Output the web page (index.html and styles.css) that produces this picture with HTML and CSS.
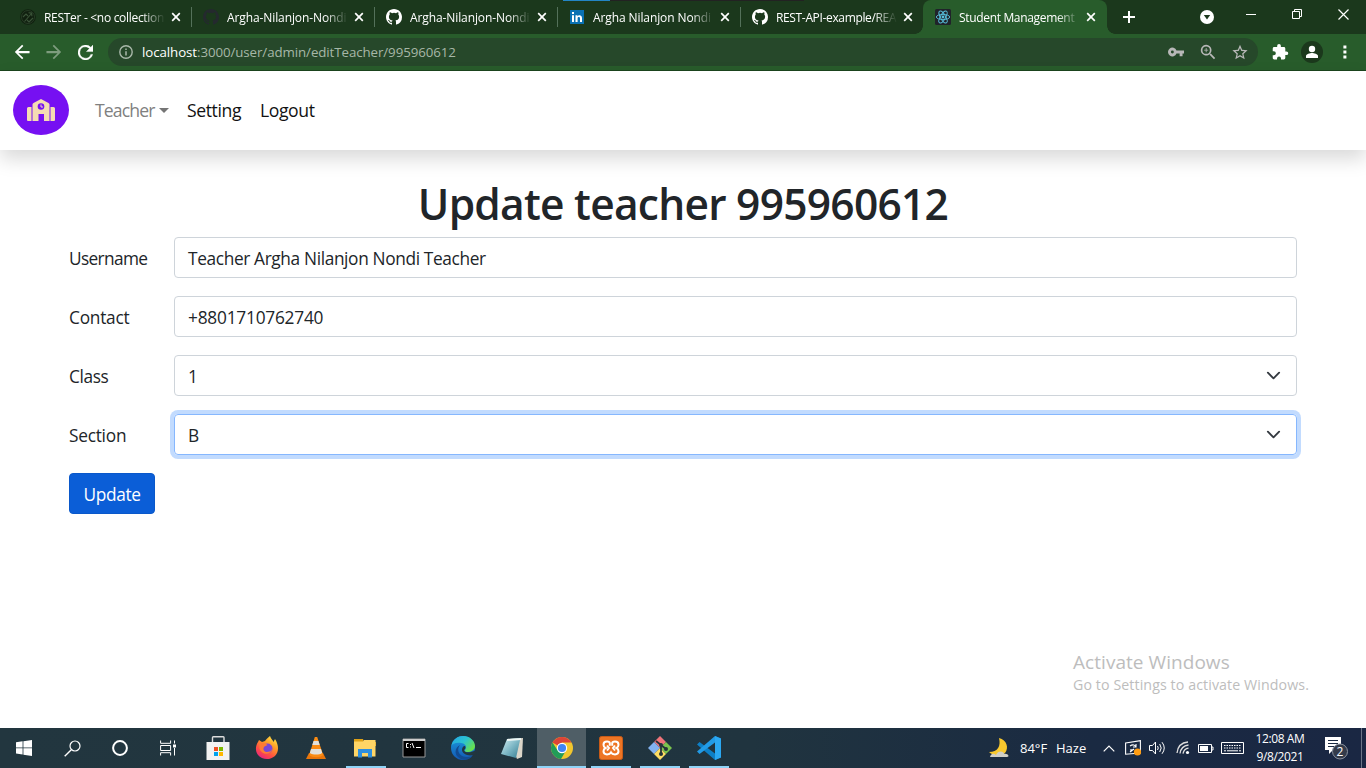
FILE: index.html
```html
<!DOCTYPE html>
<html lang="en">
<head>
<meta charset="utf-8">
<title>Student Management</title>
<link rel="stylesheet" href="styles.css">
</head>
<body>
<svg width="0" height="0" class="defs">
  <defs>
    <symbol id="github" viewBox="0 0 16 16"><path d="M8 0C3.58 0 0 3.58 0 8c0 3.54 2.29 6.53 5.47 7.59.4.07.55-.17.55-.38 0-.19-.01-.82-.01-1.49-2.01.37-2.53-.49-2.69-.94-.09-.23-.48-.94-.82-1.13-.28-.15-.68-.52-.01-.53.63-.01 1.08.58 1.23.82.72 1.21 1.87.87 2.33.66.07-.52.28-.87.51-1.07-1.78-.2-3.64-.89-3.64-3.95 0-.87.31-1.59.82-2.15-.08-.2-.36-1.02.08-2.12 0 0 .67-.21 2.2.82a7.6 7.6 0 0 1 4 0c1.53-1.04 2.2-.82 2.2-.82.44 1.1.16 1.92.08 2.12.51.56.82 1.27.82 2.15 0 3.07-1.87 3.75-3.65 3.95.29.25.54.73.54 1.48 0 1.07-.01 1.93-.01 2.2 0 .21.15.46.55.38A8.01 8.01 0 0 0 16 8c0-4.42-3.58-8-8-8z"/></symbol>
    <symbol id="close" viewBox="0 0 10 10"><path d="M1.200 1.200l7.600 7.600M8.800 1.200L1.200 8.800" stroke="#fff" stroke-width="1.700" fill="none"/></symbol>
    <linearGradient id="edgeA" x1="0" y1="0" x2="1" y2=".6"><stop offset="0" stop-color="#23a5e8"/><stop offset=".55" stop-color="#2cc3d0"/><stop offset="1" stop-color="#68e04c"/></linearGradient>
    <linearGradient id="edgeB" x1="0" y1="0" x2="0" y2="1"><stop offset="0" stop-color="#1b9de2"/><stop offset="1" stop-color="#1357b0"/></linearGradient>
    <linearGradient id="fox" x1=".9" y1="0" x2=".3" y2="1"><stop offset="0" stop-color="#fff04a"/><stop offset=".4" stop-color="#ff9a26"/><stop offset=".75" stop-color="#ff4a45"/><stop offset="1" stop-color="#e8277e"/></linearGradient>
    <linearGradient id="note" x1="0" y1="0" x2="1" y2="1"><stop offset="0" stop-color="#d8f1f5"/><stop offset=".5" stop-color="#7fb8c6"/><stop offset="1" stop-color="#347c91"/></linearGradient>
  </defs>
</svg>
<header class="tabstrip">
  <div class="tab"><svg class="fav" viewBox="0 0 16 16"><circle cx="8" cy="8" r="7.800" fill="#10200f"/><circle cx="8" cy="8" r="6.500" fill="none" stroke="#2f462e" stroke-width=".7"/><path d="M4.500 12.500l7-8M8.500 3.700l3.200.4.2 3.200M3 8l3-3 2 2M7 11l2 2 4-4" stroke="#3b5439" stroke-width="1.100" fill="none"/></svg><span class="title t1">RESTer - &lt;no collection</span><svg class="x"><use href="#close"/></svg></div>
  <div class="tab"><svg class="fav" fill="#24292e"><use href="#github"/></svg><span class="title t2">Argha-Nilanjon-Nondi</span><svg class="x"><use href="#close"/></svg></div>
  <div class="tab"><svg class="fav" fill="#fff"><use href="#github"/></svg><span class="title t2">Argha-Nilanjon-Nondi</span><svg class="x"><use href="#close"/></svg></div>
  <div class="tab"><svg class="fav" viewBox="0 0 16 16"><path d="M1 1h14v14H1z" fill="#0a71b3"/><path d="M3 6.300h2V13H3zM3 3h2v2H3zM6.500 6.300h2v1c1-1.700 4.500-1.600 4.500 1.600V13h-2V9.500c0-2-2.400-1.800-2.400 0V13H6.500z" fill="#fff"/></svg><span class="title t3">Argha Nilanjon Nondi</span><svg class="x"><use href="#close"/></svg></div>
  <div class="tab last"><svg class="fav" fill="#fff"><use href="#github"/></svg><span class="title t4">REST-API-example/REA</span><svg class="x"><use href="#close"/></svg></div>
  <div class="tab active"><svg class="fav" viewBox="0 0 16 16"><rect width="16" height="16" rx="1.500" fill="#20232a"/><g fill="none" stroke="#58bfdc" stroke-width=".9"><ellipse cx="8" cy="8" rx="6.700" ry="2.600"/><ellipse cx="8" cy="8" rx="6.700" ry="2.600" transform="rotate(60 8 8)"/><ellipse cx="8" cy="8" rx="6.700" ry="2.600" transform="rotate(120 8 8)"/></g><circle cx="8" cy="8" r="1.400" fill="#58bfdc"/></svg><span class="title t5">Student Management</span><svg class="x"><use href="#close"/></svg></div>
  <svg class="plus" viewBox="0 0 12 12"><path d="M6 0v12M0 6h12" stroke="#fff" stroke-width="2"/></svg>
  <div class="winbtns">
    <svg width="14" height="14" viewBox="0 0 14 14" class="drop"><circle cx="7" cy="7" r="7" fill="#fff"/><path d="M3.800 5h6.400L7 9.400z" fill="#1b381c"/></svg>
    <svg width="10" height="10" class="min"><path d="M0 5.500h10" stroke="#fff"/></svg>
    <svg width="10" height="10" class="max"><path d="M.5 2.500h7v7h-7zM2.500 2.500v-2h7v7h-2" stroke="#fff" fill="none"/></svg>
    <svg width="11" height="11" class="quit"><path d="M.5.500l10 10M10.500.500l-10 10" stroke="#fff" stroke-width="1.200"/></svg>
  </div>
  <i class="strip"></i>
</header>
<div class="toolbar">
  <svg class="nav" viewBox="0 0 24 24"><path d="M24 10.300H6l8-8L12 .3.300 12 12 23.700l2-2-8-8h18z" fill="#fff" transform="translate(1 1) scale(.93)"/></svg>
  <svg class="nav fwd" viewBox="0 0 24 24"><path d="M24 10.300H6l8-8L12 .3.300 12 12 23.700l2-2-8-8h18z" fill="#7e9c7e" transform="translate(23 1) scale(-.93 .93)"/></svg>
  <svg class="nav" viewBox="4 4 16 16"><path d="M17.650 6.350A8 8 0 1 0 19.730 14h-2.080A6 6 0 1 1 12 6c1.660 0 3.140.69 4.220 1.780L13 11h7V4z" fill="#fff" stroke="#fff" stroke-width=".4"/></svg>
  <div class="omni">
    <svg width="14" height="14" viewBox="0 0 14 14"><circle cx="7" cy="7" r="6.200" fill="none" stroke="#a9b8aa" stroke-width="1.400"/><path d="M7 6.200V10.500M7 3.500V5" stroke="#a9b8aa" stroke-width="1.500"/></svg>
    <span class="url"><b>localhost</b>:3000/user/admin/editTeacher/995960612</span>
    <span class="omni-icons">
      <svg width="16" height="16" viewBox="1 1 22 22"><path d="M12.650 10A6 6 0 1 0 12.650 14H17v4h4v-4h2v-4zM7 14a2 2 0 1 1 0-4 2 2 0 0 1 0 4z" fill="#b8b8b8"/></svg>
      <svg width="16" height="16" viewBox="2 2 19.500 19.500"><path d="M15.500 14h-.79l-.28-.27A6.500 6.500 0 1 0 13.730 14.430l.27.28v.79l5 5L20.500 19zM9.500 14a4.500 4.500 0 1 1 0-9 4.500 4.500 0 0 1 0 9zM9 7h1v2h2v1h-2v2H9v-2H7V9h2z" fill="#b8b8b8"/></svg>
      <svg width="16" height="16" viewBox="1.500 1 21 21"><path d="M22 9.240l-7.190-.62L12 2 9.190 8.630 2 9.240l5.460 4.730L5.820 21 12 17.270 18.180 21l-1.630-7.030zM12 15.400l-3.760 2.270 1-4.280-3.320-2.880 4.380-.38L12 6.100l1.710 4.040 4.380.38-3.320 2.880 1 4.280z" fill="#b8b8b8"/></svg>
    </span>
  </div>
  <svg class="ext" width="17" height="17" viewBox="1 1 23 23"><path d="M20.500 11H19V7a2 2 0 0 0-2-2h-4V3.500a2.500 2.500 0 0 0-5 0V5H4a2 2 0 0 0-2 2v3.800h1.500a2.700 2.700 0 0 1 0 5.400H2V20c0 1.100.9 2 2 2h3.800v-1.500a2.700 2.700 0 0 1 5.400 0V22H17a2 2 0 0 0 2-2v-4h1.500a2.500 2.500 0 0 0 0-5z" fill="#fff"/></svg>
  <svg class="avatar" width="22" height="22" viewBox="0 0 22 22"><circle cx="11" cy="11" r="11" fill="#1b381c"/><circle cx="11" cy="8" r="3.200" fill="#fff"/><path d="M5 17v-2c0-2 4-3 6-3s6 1 6 3v2z" fill="#fff"/></svg>
  <svg class="dots" width="4" height="14" viewBox="0 0 4 14"><path d="M.4.400h3v3h-3zM.4 5.400h3v3h-3zM.4 10.400h3v3h-3z" fill="#fff"/></svg>
</div>
<main class="page">
  <nav class="navbar">
    <svg class="logo" viewBox="0 0 56 50"><ellipse cx="28" cy="25" rx="28" ry="25" fill="#7610f2"/><path d="M14 23.500a1.500 1.500 0 0 1 1.500-1.500h3v14h-3.500a1 1 0 0 1-1-1zM42 23.500a1.500 1.500 0 0 0-1.500-1.500h-3v14h3.500a1 1 0 0 0 1-1zM19.500 19.500q0-1 1-1.600L28 14l7.500 3.900q1 .6 1 1.600V36H31v-7h-5.500v7h-6z" fill="#f5dcb3"/><circle cx="28" cy="21.500" r="3.300" fill="#7610f2"/><path d="M28 19.500v2.500h2" stroke="#f5dcb3" fill="none"/></svg>
    <a class="n1">Teacher</a><i class="caret"></i><a class="n2">Setting</a><a class="n3">Logout</a>
  </nav>
  <section class="content">
    <h1><span>Update teacher 995960612</span></h1>
    <form>
      <div class="row"><label class="l1">Username</label><div class="field"><span class="v1">Teacher Argha Nilanjon Nondi Teacher</span></div></div>
      <div class="row"><label class="l2">Contact</label><div class="field"><span class="v2">+8801710762740</span></div></div>
      <div class="row"><label class="l3">Class</label><div class="field"><span>1</span><svg class="chev" viewBox="0 0 16 16"><path d="M2 5l6 6 6-6" fill="none" stroke="#343a40" stroke-width="2" stroke-linecap="round" stroke-linejoin="round"/></svg></div></div>
      <div class="row"><label class="l4">Section</label><div class="field focus"><span>B</span><svg class="chev" viewBox="0 0 16 16"><path d="M2 5l6 6 6-6" fill="none" stroke="#343a40" stroke-width="2" stroke-linecap="round" stroke-linejoin="round"/></svg></div></div>
      <button type="button"><span>Update</span></button>
    </form>
  </section>
  <div class="watermark"><p class="w1">Activate Windows</p><p class="w2">Go to Settings to activate Windows.</p></div>
</main>
<footer class="taskbar">
  <div class="sys">
    <div><svg width="16" height="16" viewBox="0 0 16 16"><path d="M0 2.300L6.600 1.300V7.500H0zM7.400 1.200L16 0v7.500H7.400zM0 8.300h6.600v6.200L0 13.600zM7.400 8.300H16V16l-8.600-1.300z" fill="#fff"/></svg></div>
    <div><svg width="17" height="17" viewBox="0 0 17 17"><circle cx="11" cy="6" r="5" fill="none" stroke="#fff" stroke-width="1.200"/><path d="M7.300 9.700L.7 16.300" stroke="#fff" stroke-width="1.400"/></svg></div>
    <div><svg width="18" height="18"><circle cx="9" cy="9" r="6.900" fill="none" stroke="#fff" stroke-width="2"/></svg></div>
    <div><svg width="17" height="16" viewBox="0 0 17 16"><path d="M.6.500v2.800h10V.5M.6 15.500v-2.800h10v2.800M.6 5.500h10v5H.6zM14.500.500v3M14.500 8v7.500" fill="none" stroke="#fff"/><path d="M13 4.500h3v3h-3z" fill="#fff"/></svg></div>
  </div>
  <div class="apps">
    <div><svg viewBox="0 0 24 24"><path d="M6.500 7V1.500q0-.8.800-.8h9.900q.8 0 .8.800V7" fill="none" stroke="#ddd" stroke-width="1.400"/><path d="M.5 6h23v18H.5z" fill="#f2f2f2"/><path d="M8 11h4v4H8z" fill="#f05023"/><path d="M13 11h4v4h-4z" fill="#7db900"/><path d="M8 16h4v4H8z" fill="#00a2ed"/><path d="M13 16h4v4h-4z" fill="#ffb800"/></svg></div>
    <div><svg viewBox="0 0 24 24"><path d="M15 0c1 3 3 4 3.500 6L20 3c4 6 4 13 0 17-5 4.500-13 4-17-1-3-4-2.500-9 0-13l1-2 3 2 3-1c1-2 3-3 5-5z" fill="url(#fox)"/><circle cx="12.500" cy="12.500" r="5" fill="#7a48d6"/><path d="M4.500 8c3-2 6-1 8 1l-3 1.500c-2 2-1 5 2 5.500 3 0 5-1 6-4-1 7-10 8-13 1z" fill="#ff7b35"/></svg></div>
    <div><svg viewBox="0 0 24 24"><path d="M5 17h14l3 6H2z" fill="#e8750b"/><path d="M10.800 1h2.400l6 18c-3 3-11 3-14 0z" fill="#fa8b13"/><path d="M9.500 5h5l1.200 4H8.300zM7 13h10l1.200 4c-3 2-9 2-12.400 0z" fill="#e2e0da"/></svg></div>
    <div class="open"><svg viewBox="0 0 24 24"><path d="M1 3h9l1 3h12v4H1z" fill="#dfa117"/><path d="M1 5.500h9l1-1.500h11.500v16.500H1z" fill="#ffd566"/><path d="M5 21.500V13h14v8.500h-4V17H9v4.500z" fill="#2f8fde"/></svg></div>
    <div><svg viewBox="0 0 24 24"><path d="M1 3h22v18H1z" fill="#000" stroke="#999"/><path d="M1 3h22v2H1z" fill="#ccc"/><path d="M6.500 7.500H4.500v4h2M8 8.500h1M8 11h1M10 7l2 5M14 11.500h5" fill="none" stroke="#fff"/></svg></div>
    <div><svg viewBox="0 0 24 24"><circle cx="12" cy="12" r="12" fill="url(#edgeB)"/><path d="M.3 10C2 3 7 0 12 0c7 0 12 5 12 10 0 4-4 6-8 6-2 0-3-1-2-2 3-4-1-7-4-7C5 6 1 8 .3 10z" fill="url(#edgeA)"/><path d="M9 9c-4 5-1 12 7 12 3 0 5-1 6-2-3 6-12 6-16 1-3-4-1-9 3-11z" fill="#124b91"/><path d="M14 10c1 2 0 3-1 4 0 3 7 3 11 .5v4c-6 2.500-13-.5-13-4.500 0-2 1-4 3-4z" fill="#22363f"/></svg></div>
    <div><svg viewBox="0 0 24 24"><path d="M8 3l15-1-1 19-5 2z" fill="#dad5c9"/><path d="M7 3l13.500-1L16 22 1 18z" fill="url(#note)"/><path d="M7 3l14-1v2L7 5z" fill="#eef6f4"/></svg></div>
    <div class="current"><svg viewBox="0 0 24 24"><circle cx="12" cy="12" r="11" fill="#f2c62e"/><path d="M12 12L2.500 6.500A11 11 0 0 1 21.500 6.500H12z" fill="#dc4437"/><path d="M2.500 6.500A11 11 0 0 0 11 23l5-8.500-9-1z" fill="#219c58"/><circle cx="12" cy="12" r="5.200" fill="#fff"/><circle cx="12" cy="12" r="4.100" fill="#4184f3"/></svg></div>
    <div class="open"><svg viewBox="0 0 24 24"><rect x=".5" y=".5" width="23" height="23" rx="2" fill="#ed7524" stroke="#c75b18"/><path d="M10.800 9.800V7.200Q10.800 5.600 8 5.600 4.500 5.600 4.500 8.700 4.500 11 6.500 12 4.500 13 4.500 15.300 4.500 18.400 8 18.400 11 18.400 12 16.500 13 18.400 16 18.400 19.500 18.400 19.500 15.300 19.500 13 17.500 12 19.500 11 19.500 8.700 19.500 5.600 16 5.600 13.200 5.600 13.200 7.200V9.800M8 9.500l2 2.500-2 2.500M16 9.500l-2 2.500 2 2.500" fill="none" stroke="#fff" stroke-width="2"/></svg></div>
    <div class="open"><svg viewBox="0 0 24 24"><path d="M12 0l6 6-6 6-6-6z" fill="#f0747a"/><path d="M6 6l6 6-6 6-6-6z" fill="#82b2f0"/><path d="M18 6l6 6-6 6-6-6z" fill="#7bc34e"/><path d="M12 12l6 6-6 6-6-6z" fill="#ffdd63"/><path d="M8 5l5 4v9M13 9l5 4" fill="none" stroke="#25323a" stroke-width="1.800"/><g fill="#25323a"><circle cx="13" cy="9" r="2"/><circle cx="13" cy="18" r="2"/><circle cx="18" cy="13" r="2"/></g></svg></div>
    <div class="open"><svg viewBox="0 0 24 24"><path d="M18 0l6 2.500v19L18 24 0 8.500 2.500 6 18 17.500z" fill="#0d7fc6"/><path d="M18 0L0 15.500 2.500 18 18 6.500z" fill="#229be6"/><path d="M18 0l6 2.500v19L18 24z" fill="#2ba8f2"/></svg></div>
  </div>
  <div class="tray">
    <svg class="moon" width="22" height="22" viewBox="0 0 22 22"><path d="M11 1c8 2 10 10 6 15-4 4-12 3-16-1 9 0 12-6 10-14z" fill="#f8c82e"/><path d="M2 20c1-4 4-4 6-2 2-5 8-4 8-1 4-1 6 3 3 3z" fill="#d0cfc8"/></svg>
    <span class="temp">84°F</span><span class="haze">Haze</span>
    <svg class="up" width="12" height="7"><path d="M.7 6.300L6 1l5.300 5.300" stroke="#fff" stroke-width="1.200" fill="none"/></svg>
    <svg class="upd" width="17" height="16" viewBox="0 0 17 16"><path d="M.6 3L15.400.6V13L.6 14.200zM5 6c3-2 5-1 6 1M11 4v3H8M5 10l4-.5M9 9l-4 3" fill="none" stroke="#fff" stroke-width="1.100"/><circle cx="12.500" cy="12" r="3.600" fill="#ff9d12"/></svg>
    <svg class="vol" width="17" height="14" viewBox="0 0 17 14"><path d="M.5 4.500h3l3-3.500v12l-3-3.500h-3zM8.500 5q1.500 2 0 4M10.700 3q3 4 0 8M13 1.200q4.500 5.800 0 11.600" fill="none" stroke="#fff"/></svg>
    <svg class="wifi" width="14" height="14" viewBox="0 0 14 14"><path d="M1 12Q2 2 12 1M4 12.500Q5 5 12.500 4M7 12.700q1-5 5.500-5.500" fill="none" stroke="#ddd" stroke-width="1.300"/><circle cx="11.500" cy="11.500" r="1.600" fill="#fff"/></svg>
    <svg class="bat" width="16" height="9" viewBox="0 0 16 9"><path d="M.5.500h13v8H.5zM13.500 3h1.500v3h-1.500z" fill="none" stroke="#fff"/><path d="M2 2h8v5H2z" fill="#fff"/></svg>
    <svg class="kb" width="23" height="12" viewBox="0 0 23 12"><path d="M.5.500h22v11H.5z" fill="none" stroke="#fff"/><path d="M3 3.500h17M3 6h17" stroke="#fff" stroke-dasharray="1.500 1"/><path d="M3 8.800h2M6 8.800h11M18 8.800h2" stroke="#fff"/></svg>
    <div class="clock"><span class="c1">12:08 AM</span><span class="c2">9/8/2021</span></div>
    <svg class="notif" width="25" height="24" viewBox="0 0 25 24"><path d="M1 1h16v13H9l-4 4v-4H1z" fill="#fff"/><path d="M4 4.500h10M4 7.500h10M4 10.500h6" stroke="#1a2a42"/><circle cx="16" cy="15.500" r="7.500" fill="#343b4a" stroke="#8b93a0"/><text x="16" y="20" class="num" text-anchor="middle">2</text></svg>
    <i class="edge"></i>
  </div>
</footer>
</body>
</html>
```
FILE: styles.css
```css
* { box-sizing: border-box; }
body { margin: 0; width: 1366px; height: 768px; overflow: hidden; display: flex; flex-direction: column; font-family: "Open Sans", "Noto Sans", sans-serif; background: #fff; }
.defs { display: block; position: absolute; }
svg { display: block; flex: none; }
span, a, label { white-space: nowrap; }

.tabstrip { position: relative; height: 34px; flex: none; background: #1b381c; display: flex; padding-left: 8px; }
.strip { position: absolute; left: 563px; top: 0; width: 241px; height: 1px; background: linear-gradient(90deg, #2385c4 47px, #222 47px); }
.tab { position: relative; width: 183px; height: 34px; flex: none; display: flex; align-items: center; padding-left: 12px; color: #fff; font-size: 12px; }
.tab::after { content: ""; position: absolute; right: -1px; top: 7px; width: 1px; height: 20px; background: #54715a; }
.tab.last::after, .tab.active::after { display: none; }
.tab.active { width: 184px; background: #285c2b; border-radius: 8px 8px 0 0; }
.tab.active::before { content: ""; position: absolute; left: -8px; right: -8px; bottom: 0; height: 8px; background: radial-gradient(circle at 0 0, transparent 7.5px, #285c2b 8px) left / 8px 8px no-repeat, radial-gradient(circle at 100% 0, transparent 7.5px, #285c2b 8px) right / 8px 8px no-repeat; }
.fav { width: 16px; height: 16px; margin-right: 8px; }
.title { width: 127px; -webkit-mask-image: linear-gradient(90deg, #000 98px, transparent 121px); mask-image: linear-gradient(90deg, #000 98px, transparent 121px); }
.x { width: 10px; height: 10px; }
.t1 { letter-spacing: -.3px; }
.t2 { letter-spacing: -.1px; }
.t3 { letter-spacing: -.1px; }
.t4 { letter-spacing: -.35px; }
.t5 { letter-spacing: -.33px; }
.plus { width: 12px; height: 12px; margin: 11px 0 0 16px; }
.winbtns { display: flex; margin: 9px 0 0 65px; }
.drop { margin-top: 1px; }
.min { margin-left: 32px; }
.max { margin-left: 36px; }
.quit { margin-left: 36px; }

.toolbar { height: 37px; flex: none; background: #285c2b; border-bottom: 1px solid #1b451e; display: flex; align-items: center; padding-left: 14px; }
.nav { width: 16px; height: 16px; margin-right: 16px; }
.toolbar .nav:nth-child(3) { width: 15px; height: 15px; margin-right: 15px; }
.omni { width: 1150px; height: 28px; border-radius: 14px; background: #26482a; display: flex; align-items: center; padding: 0 10px 0 11px; }
.url { color: #a6b7a7; font-size: 13.3px; margin-left: 9px; letter-spacing: -.08px; }
.url b { color: #fff; font-weight: 400; }
.omni-icons { display: flex; gap: 16px; margin-left: auto; }
.ext { margin-left: 14px; }
.avatar { margin-left: 12px; }
.dots { margin-left: 20px; }

.page { position: relative; flex: 1; }
.navbar { height: 79px; display: flex; align-items: center; padding: 0 0 1px 13px; font-size: 17.6px; color: #111; box-shadow: 0 9px 18px rgba(0,0,0,.15); }
.logo { width: 56px; height: 50px; margin-right: 26px; }
.n1 { color: #808080; width: 60px; letter-spacing: -.85px; }
.caret { border: 5px solid transparent; border-top-color: #757575; border-bottom: 0; margin: 0 18px 0 4px; }
.n2 { width: 73px; letter-spacing: -.4px; }
.n3 { letter-spacing: -.4px; }
.content { padding: 27px 69px 0; }
h1 { margin: 0 0 7px; height: 53px; line-height: 53px; font-size: 42.5px; font-weight: 550; color: #212529; text-align: center; letter-spacing: -.74px; white-space: nowrap; }
.row { display: flex; height: 41px; margin-bottom: 18px; align-items: center; color: #212529; font-size: 17.3px; }
.row label { width: 105px; letter-spacing: -.65px; padding-top: 1px; }
.field { flex: 1; height: 41px; border: 1px solid #ced4da; border-radius: 4px; display: flex; align-items: center; justify-content: space-between; padding: 1px 15px 0 13px; letter-spacing: -.36px; }
.row .l2, .row .l4 { letter-spacing: -.25px; }
.row .l3 { letter-spacing: -.4px; }
.v2 { letter-spacing: -.22px; }
.field.focus { border-color: #86b7fe; box-shadow: 0 0 0 4px rgba(13,110,253,.25); }
.chev { width: 15px; height: 15px; margin-top: -1px; }
button { width: 86px; height: 41px; border: 1px solid #0a58ca; border-radius: 4px; background: #0b5ed7; color: #fff; font: 17.3px "Open Sans", sans-serif; padding: 1px 0 0; letter-spacing: -.35px; }
.watermark { position: absolute; left: 1073px; top: 578px; color: #bdbdbd; }
.watermark p { margin: 0; white-space: nowrap; }
.w1 { font-size: 19px; line-height: 26px; letter-spacing: .05px; }
.w2 { font-size: 14.2px; line-height: 20px; letter-spacing: .1px; }

.taskbar { height: 40px; flex: none; background: linear-gradient(90deg, #22363f 0, #20343f 55%, #1a2a42 80%, #1a2743); display: flex; color: #fff; }
.sys, .apps { display: flex; }
.sys > div { width: 48px; display: flex; align-items: center; justify-content: center; }
.apps { padding-left: 2px; }
.apps > div { position: relative; width: 49px; display: flex; align-items: center; justify-content: center; }
.apps > div:nth-child(-n+7) svg { margin-right: 1px; }
.apps svg { width: 24px; height: 24px; }
.open::after, .current::after { content: ""; position: absolute; bottom: 0; left: 5px; width: 40px; height: 2px; background: #8fd3f7; }
.current { background: #4f5e66; }
.current::after { left: 0; width: 49px; }
.tray { display: flex; align-items: center; flex: 1; margin-left: 255px; font-size: 13px; }
.moon { margin-right: 10px; }
.temp { width: 36px; }
.haze { width: 47px; }
.up { margin-right: 10px; }
.upd { margin-right: 7px; }
.vol { margin-right: 10px; }
.wifi { margin-right: 8px; }
.bat { margin-right: 7px; }
.kb { margin-right: 8px; }
.clock { width: 56px; display: flex; flex-direction: column; align-items: center; font-size: 12px; line-height: 18px; letter-spacing: -.4px; }
.notif { margin-left: 16px; }
.num { font-size: 12px; fill: #fff; }
.edge { width: 1px; height: 40px; background: #6b7688; margin-left: 12px; }
```
